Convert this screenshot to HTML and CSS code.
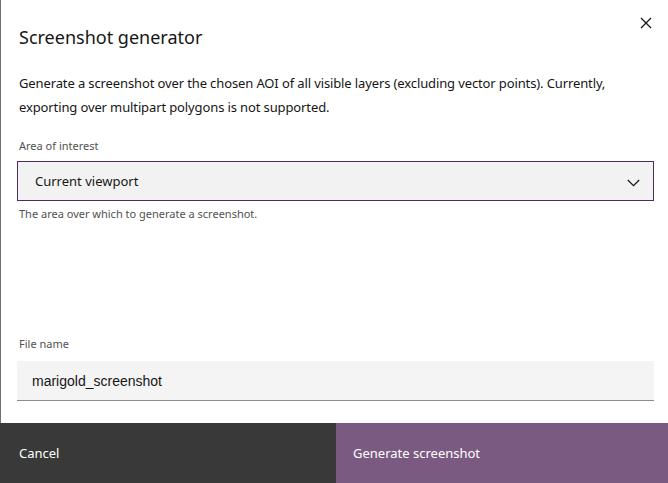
FILE: index.html
```html
<!DOCTYPE html>
<html lang="en">
<head>
  <meta charset="UTF-8">
  <meta name="viewport" content="width=device-width, initial-scale=1.0">
  <title>Screenshot generator</title>
  <link rel="stylesheet" href="styles.css">
</head>
<body>
  <!-- Modal -->
  <div class="modal">
    <div class="modal-body">
      <button class="close-button" aria-label="Close">
        <svg width="12" height="12" viewBox="0 0 12 12">
          <path d="M1 1 L11 11 M11 1 L1 11" stroke="#161616" stroke-width="1.3" fill="none"/>
        </svg>
      </button>
      <h2 class="modal-title">Screenshot generator</h2>
      <p class="modal-text">Generate a screenshot over the chosen AOI of all visible layers (excluding vector points). Currently, exporting over multipart polygons is not supported.</p>

      <div class="field">
        <label class="field-label">Area of interest</label>
        <div class="select">
          <span>Current viewport</span>
          <svg width="13" height="8" viewBox="0 0 13 8">
            <path d="M0.8 1 L6.5 6.7 L12.2 1" stroke="#161616" stroke-width="1.2" fill="none"/>
          </svg>
        </div>
        <div class="field-helper">The area over which to generate a screenshot.</div>
      </div>

      <div class="field field-file">
        <label class="field-label">File name</label>
        <input class="text-input" type="text" value="marigold_screenshot">
      </div>
    </div>

    <div class="modal-footer">
      <button class="btn btn-secondary">Cancel</button>
      <button class="btn btn-primary">Generate screenshot</button>
    </div>
  </div>
</body>
</html>
```

FILE: styles.css
```css
/* Global Styles */
* {
  box-sizing: border-box;
  margin: 0;
  padding: 0;
}

body {
  font-family: "Noto Sans", "Open Sans", sans-serif;
  color: #161616;
  background-color: #fff;
  width: 668px;
  height: 483px;
  overflow: hidden;
}

/* Modal */
.modal {
  display: flex;
  flex-direction: column;
  height: 483px;
}

.modal-body {
  position: relative;
  flex: 1;
  border-left: 1px solid #6f6f6f;
  padding: 24px 14px 0 16px;
}

.close-button {
  position: absolute;
  top: 17px;
  right: 16px;
  width: 12px;
  height: 12px;
  background: none;
  border: none;
  cursor: pointer;
}

.modal-title {
  font-size: 18px;
  font-weight: 400;
  line-height: 26px;
  margin-left: 2px;
}

.modal-text {
  font-size: 13px;
  letter-spacing: -0.12px;
  line-height: 24px;
  margin: 21px 0 0 2px;
}

/* Fields */
.field {
  margin-top: 19px;
}

.field-label {
  display: block;
  font-size: 11px;
  color: #525252;
  line-height: 16px;
  margin: 0 0 7px 2px;
}

.select {
  display: flex;
  align-items: center;
  justify-content: space-between;
  height: 40px;
  background-color: #f2f2f2;
  border: 1px solid #4d2c5e;
  padding: 0 13px 0 17px;
  font-size: 13px;
}

.select svg {
  margin-top: 4px;
}

.field-helper {
  font-size: 11px;
  color: #525252;
  line-height: 16px;
  margin: 5px 0 0 2px;
}

.field-file {
  margin-top: 114px;
}

.field-file .field-label {
  margin-bottom: 9px;
}

.text-input {
  display: block;
  width: 100%;
  height: 40px;
  background-color: #f4f4f4;
  border: none;
  border-bottom: 1px solid #8d8d8d;
  padding: 0 15px;
  font-family: "Liberation Sans", Arial, sans-serif;
  font-size: 14px;
  color: #161616;
  outline: none;
}

/* Footer */
.modal-footer {
  display: flex;
  height: 60px;
}

.btn {
  flex: 1;
  border: none;
  color: #fff;
  font-family: "Noto Sans", "Open Sans", sans-serif;
  font-size: 13px;
  text-align: left;
  padding: 0 18px;
  cursor: pointer;
}

.btn-secondary {
  background-color: #393939;
  flex: 0 0 336px;
  padding-left: 19px;
}

.btn-primary {
  background-color: #7b5a82;
  padding-left: 17px;
}
```
